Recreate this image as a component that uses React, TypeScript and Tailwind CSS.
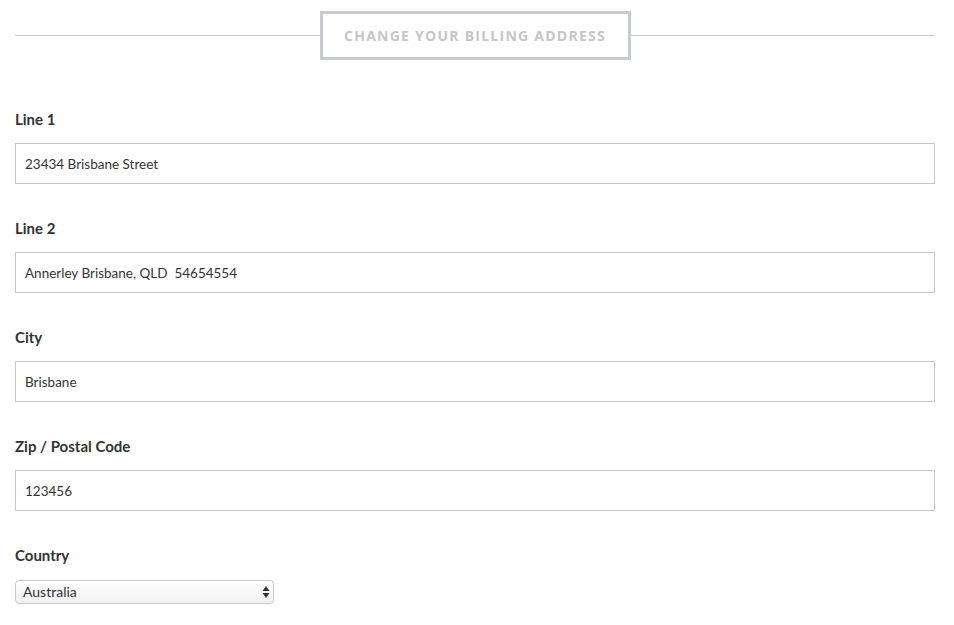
import React from 'react';

const fields = [
  { label: 'Line 1', value: '23434 Brisbane Street' },
  { label: 'Line 2', value: 'Annerley Brisbane, QLD  54654554' },
  { label: 'City', value: 'Brisbane' },
  { label: 'Zip / Postal Code', value: '123456' },
];

const App: React.FC = () => {
  return (
    <div className="w-[954px] h-[625px] bg-white pl-[15px] pr-[19px] pt-[11px] text-[#333] font-['Lato',sans-serif] overflow-hidden">
      {/* Heading */}
      <div className="flex items-center">
        <div className="flex-1 h-px bg-[#c3c6c9]" />
        <div className="w-[311px] h-[49px] border-[3px] border-[#c8cbce] flex items-center justify-center">
          <span className="font-['Open_Sans',sans-serif] font-bold text-[14px] tracking-[1.25px] text-[#c3c6c9] uppercase">
            Change your billing address
          </span>
        </div>
        <div className="flex-1 h-px bg-[#c3c6c9]" />
      </div>

      <form className="mt-[49px]">
        {fields.map((f) => (
          <div key={f.label} className="mb-[34px]">
            <label className="block text-[15px] leading-[20px] font-bold text-[#333] mb-[14px]">{f.label}</label>
            <input
              readOnly
              value={f.value}
              className="block w-full h-[41px] border border-[#c4c6c8] px-[9px] text-[13.5px] text-[#333] outline-none font-['Lato',sans-serif]"
            />
          </div>
        ))}

        <div>
          <label className="block text-[15px] leading-[20px] font-bold text-[#333] mb-[15px]">Country</label>
          <div className="relative w-[259px]">
            <select
              defaultValue="Australia"
              className="appearance-none block w-full h-[24px] rounded-[4px] border border-[#c8c8c8] bg-gradient-to-b from-white to-[#f1f1f1] pl-[7px] pr-6 text-[14px] leading-[20px] text-[#333] font-['Lato',sans-serif] outline-none"
            >
              <option>Australia</option>
              <option>New Zealand</option>
            </select>
            <svg className="absolute right-[4px] top-[5px] pointer-events-none" width="8" height="14" viewBox="0 0 8 14">
              <path d="M4 1 L7.5 6 H0.5 Z" fill="#333" />
              <path d="M4 13 L7.5 8 H0.5 Z" fill="#333" />
            </svg>
          </div>
        </div>
      </form>
    </div>
  );
};

export default App;
